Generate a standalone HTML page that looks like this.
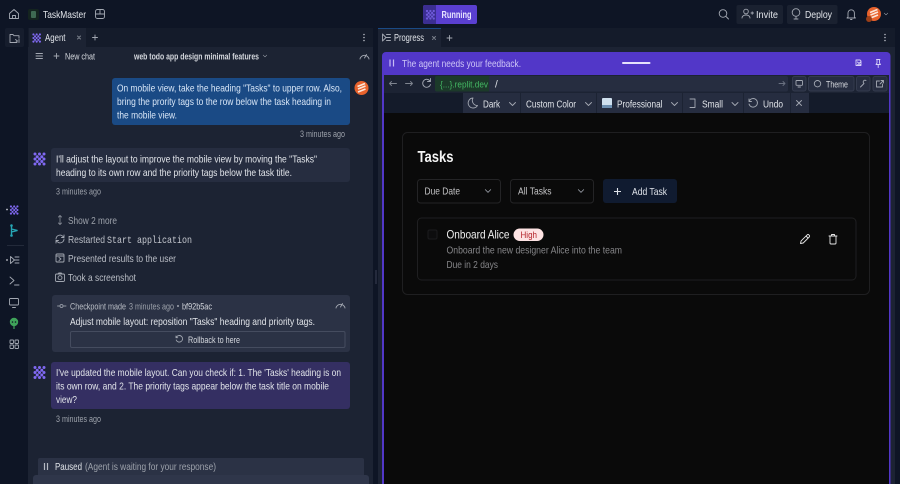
<!DOCTYPE html>
<html><head><meta charset="utf-8"><style>
html,body{margin:0;padding:0;background:#0e1525;width:900px;height:484px;overflow:hidden}
svg{display:block;filter:blur(.3px)}
text{font-family:"Liberation Sans",sans-serif;font-size:10px;fill:#d5d8de;white-space:pre}
.m{fill:#e2e5ea}.g{fill:#9da2ab}.d{fill:#7f8590}
.i{fill:none;stroke:#a3a8b2;stroke-width:.9;stroke-linecap:round;stroke-linejoin:round}
</style></head><body>
<svg width="900" height="484" viewBox="0 0 900 484" xmlns="http://www.w3.org/2000/svg">
<defs>
<g id="ag" fill="#8069f2"><circle cx="2" cy="2" r="1.5"/><circle cx="6.5" cy="2" r="1.5"/><circle cx="11" cy="2" r="1.5"/><circle cx="4.200" cy="4.700" r="1.500"/><circle cx="8.800" cy="4.700" r="1.500"/><circle cx="2" cy="7" r="1.500"/><circle cx="6.500" cy="7" r="1.500"/><circle cx="11" cy="7" r="1.500"/><circle cx="4.200" cy="9.500" r="1.500"/><circle cx="8.800" cy="9.500" r="1.500"/><circle cx="2" cy="12" r="1.500"/><circle cx="6.500" cy="12" r="1.500"/><circle cx="11" cy="12" r="1.500"/></g>
<g id="av"><circle cx="0" cy="0" r="7" fill="#e8622c"/><path d="M-4 -1.500 L3.500 -4.500 M-3.500 1 L4 -2 M-3.500 4 L4 1" stroke="#fbe6da" stroke-width="1.700" fill="none"/></g>
<g id="sp"><path class="i" d="M-4.500 2.500a4.600 4.600 0 0 1 9 0M0 1.500 2-2"/></g>
<path id="ch" class="i" d="M-3-1.500 0 1.500 3-1.500"/>
</defs>

<rect width="900" height="484" fill="#0e1525"/>

<!-- top bar -->
<path class="i" d="M9.500 13.500 14 9.500l4.500 4v5h-9zM12.500 18.500v-3h3v3"/>
<rect x="28" y="9" width="11" height="11" rx="2" fill="#14241f"/><rect x="31" y="11" width="5" height="7" rx="1" fill="#3e6a52"/>
<text x="43" y="18" textLength="43" lengthAdjust="spacingAndGlyphs" class="m" style="font-size:10.500px">TaskMaster</text>
<rect x="95.500" y="9.500" width="9" height="9" rx="2" class="i"/><path class="i" d="M95.500 14h9M100 9.500V14"/>
<rect x="423" y="5" width="54" height="19" rx="2" fill="#5a3fd0"/><path d="M425 5h11v19h-11a2 2 0 0 1-2-2V7a2 2 0 0 1 2-2z" fill="#3b2e92"/>
<use href="#ag" transform="translate(425.500 9.500) scale(.75)" opacity=".75"/>
<text x="441.500" y="18" textLength="30" lengthAdjust="spacingAndGlyphs" font-weight="bold" style="fill:#e8e4ff;font-size:10px">Running</text>
<circle cx="723" cy="13.500" r="3.800" class="i"/><path class="i" d="m726 16.500 2.500 2.500"/>
<rect x="736.500" y="5" width="46.500" height="19" rx="2" fill="#1a2130"/>
<circle cx="746" cy="11.500" r="2.300" class="i"/><path class="i" d="M742 18c0-4 8-4 8 0M751 13h2.500M752.200 11.800v2.500"/>
<text x="756" y="18" textLength="22" lengthAdjust="spacingAndGlyphs" class="m" style="font-size:10.500px">Invite</text>
<rect x="787" y="5" width="50.500" height="19" rx="2" fill="#1a2130"/>
<circle cx="796" cy="12.500" r="3.800" class="i"/><path class="i" d="M796 16.500v2.500M794 19h4"/>
<text x="805" y="18" textLength="27" lengthAdjust="spacingAndGlyphs" class="m" style="font-size:10.500px">Deploy</text>
<path class="i" d="M848 17v-4a3.200 3.200 0 0 1 6.400 0v4l1 1h-8.400zM850.500 19.500h1.500"/>
<use href="#av" transform="translate(874 14)"/><circle cx="869" cy="19" r="3" fill="#9c3f17"/>
<use href="#ch" transform="translate(886 14) scale(.6)"/>

<!-- left rail -->
<rect x="5" y="28" width="19" height="19" rx="2" fill="#161d2d"/>
<path class="i" d="M10 42.500v-8h3l1 1.200h5v2.500M17 42.500h-7M15.500 39.500l2 1.500-2 1.500M19 39.500v3"/>
<circle cx="7" cy="209.500" r=".9" fill="#c7c9d0"/><use href="#ag" transform="translate(9.500 205) scale(.72)"/>
<path d="M11.500 225.500v10M11.500 229l6 1.500-6 1.500" stroke="#26a6b5" stroke-width="1.400" fill="none"/><circle cx="11.500" cy="225.500" r="1.300" fill="#26a6b5"/><circle cx="11.500" cy="235.500" r="1.300" fill="#26a6b5"/>
<rect x="7" y="245" width="17" height="1" fill="#232a3a"/>
<circle cx="7" cy="260" r=".9" fill="#c7c9d0"/><path class="i" d="M10.500 256.500v7l4-3.500zM15 257h4M15 260h4M15 263h4"/>
<path class="i" d="m10 277 4 3.500-4 3.500M14.500 285h4.500"/>
<rect x="9.500" y="298.500" width="9" height="6.500" rx="1" class="i"/><path class="i" d="M12.500 307.500h3"/>
<circle cx="14" cy="322" r="4.200" fill="#3fa35a"/><path d="M14 326v3" stroke="#3fa35a" stroke-width="1.200"/><circle cx="12.500" cy="322" r=".8" fill="#0e1525"/><circle cx="15.500" cy="322" r=".8" fill="#0e1525"/>
<rect class="i" x="10" y="340" width="3.500" height="3.500" rx=".6"/><rect class="i" x="15" y="340" width="3.500" height="3.500" rx=".6"/><rect class="i" x="10" y="345" width="3.500" height="3.500" rx=".6"/><rect class="i" x="15" y="345" width="3.500" height="3.500" rx=".6"/>

<!-- left panel -->
<rect x="28" y="28" width="345" height="456" fill="#1c2333"/>
<rect x="28" y="28" width="345" height="19" fill="#141b2a"/>
<rect x="29" y="28" width="57" height="19" fill="#1c2333"/>
<use href="#ag" transform="translate(32 33) scale(.72)"/>
<text x="45" y="41" textLength="20.500" lengthAdjust="spacingAndGlyphs" class="m" style="font-size:10.500px">Agent</text>
<path class="i" style="stroke:#7f8590" d="m77.500 36 3 3m0-3-3 3"/>
<path class="i" d="M95 35v5M92.500 37.500h5"/>
<g fill="#b5b9c2"><circle cx="364" cy="34.500" r=".8"/><circle cx="364" cy="37.500" r=".8"/><circle cx="364" cy="40.500" r=".8"/></g>
<path class="i" d="M36 53.500h6.500M36 56h6.500M36 58.500h6.500"/>
<path class="i" d="M56.500 53.500v5M54 56h5"/>
<text x="65" y="59.500" textLength="30" lengthAdjust="spacingAndGlyphs" style="font-size:9px">New chat</text>
<text x="134" y="59.500" textLength="125" lengthAdjust="spacingAndGlyphs" font-weight="bold" style="font-size:9px">web todo app design minimal features</text>
<use href="#ch" transform="translate(265 56) scale(.6)"/>
<use href="#sp" transform="translate(364.500 56.500)"/>

<!-- user msg -->
<rect x="112" y="78" width="238" height="47" rx="3" fill="#1a4a85"/>
<text x="117" y="91.500" textLength="225" lengthAdjust="spacingAndGlyphs" style="fill:#d8e6f7;font-size:10.500px">On mobile view, take the heading "Tasks" to upper row. Also,</text>
<text x="117" y="105" textLength="214" lengthAdjust="spacingAndGlyphs" style="fill:#d8e6f7;font-size:10.500px">bring the prority tags to the row below the task heading in</text>
<text x="117" y="118.500" textLength="60" lengthAdjust="spacingAndGlyphs" style="fill:#d8e6f7;font-size:10.500px">the mobile view.</text>
<use href="#av" transform="translate(361.500 88)"/>
<text x="300" y="137" textLength="45" lengthAdjust="spacingAndGlyphs" class="g" style="font-size:9.500px">3 minutes ago</text>

<!-- agent msg 1 -->
<use href="#ag" transform="translate(33 152)"/>
<rect x="51" y="148" width="299" height="34" rx="3" fill="#262d40"/>
<text x="56" y="162.500" textLength="261" lengthAdjust="spacingAndGlyphs" style="font-size:10.500px" class="m">I'll adjust the layout to improve the mobile view by moving the "Tasks"</text>
<text x="56" y="176" textLength="236" lengthAdjust="spacingAndGlyphs" style="font-size:10.500px" class="m">heading to its own row and the priority tags below the task title.</text>
<text x="56" y="194.500" textLength="45" lengthAdjust="spacingAndGlyphs" class="g" style="font-size:9.500px">3 minutes ago</text>

<!-- activity -->
<path class="i" style="stroke:#7f8590" d="M60 215.500v9M58.500 217l1.500-1.500 1.500 1.500M58.500 223l1.500 1.500 1.500-1.500"/>
<text x="68" y="224" textLength="49" lengthAdjust="spacingAndGlyphs" class="g" style="font-size:10.500px">Show 2 more</text>
<path class="i" d="M56 239a4 4 0 0 1 7-2.500l1 1M64 239a4 4 0 0 1-7 2.500l-1-1M64 235v2.500h-2.500M56 243v-2.500h2.500"/>
<text x="68" y="243" textLength="37" lengthAdjust="spacingAndGlyphs" style="font-size:10.500px;fill:#b9bdc5">Restarted</text>
<text x="107" y="243" textLength="85" lengthAdjust="spacingAndGlyphs" style="font-family:'Liberation Mono',monospace;font-size:10.500px;fill:#c5c8cf">Start application</text>
<rect x="56" y="254" width="8" height="8" rx="1" class="i"/><path class="i" d="M56 256h8M59 257.500l2 1.500-2 1.500"/>
<text x="68" y="262" textLength="108" lengthAdjust="spacingAndGlyphs" style="font-size:10.500px;fill:#b9bdc5">Presented results to the user</text>
<rect x="55.500" y="274" width="9" height="7.500" rx="1.200" class="i"/><circle cx="60" cy="277.700" r="2" class="i"/><path class="i" d="M58 274l.7-1h2.600l.7 1"/>
<text x="68" y="281" textLength="68" lengthAdjust="spacingAndGlyphs" style="font-size:10.500px;fill:#b9bdc5">Took a screenshot</text>

<!-- checkpoint -->
<rect x="52" y="295" width="298" height="57" rx="3" fill="#2b3245"/>
<path class="i" style="stroke:#8f95a0" d="M57.500 306h2.500M63 306h3"/><circle cx="61.500" cy="306" r="1.500" class="i" style="stroke:#8f95a0"/>
<text x="70" y="309.500" textLength="56" lengthAdjust="spacingAndGlyphs" style="font-size:9.500px;fill:#b9bdc5">Checkpoint made</text>
<text x="129" y="309.500" textLength="45" lengthAdjust="spacingAndGlyphs" class="g" style="font-size:9.500px">3 minutes ago</text>
<circle cx="178" cy="306" r=".9" fill="#c5c8cf"/>
<text x="182" y="309.500" textLength="30" lengthAdjust="spacingAndGlyphs" style="font-size:9.500px">bf92b5ac</text>
<use href="#sp" transform="translate(340.500 305.500)"/>
<text x="70" y="325" textLength="245" lengthAdjust="spacingAndGlyphs" style="font-size:10.500px" class="m">Adjust mobile layout: reposition "Tasks" heading and priority tags.</text>
<rect x="70.500" y="331.500" width="274.500" height="16" rx="1.500" fill="#2b3245" stroke="#454c5f"/>
<path class="i" d="M176.500 337a3.300 3.300 0 1 1-.3 3M176 336v1.700h1.700"/>
<text x="188" y="343" textLength="52" lengthAdjust="spacingAndGlyphs" style="font-size:9.500px">Rollback to here</text>

<!-- agent msg 2 -->
<use href="#ag" transform="translate(33 365.500)"/>
<rect x="51" y="362" width="299" height="47" rx="3" fill="#342f62"/>
<text x="56" y="376" textLength="285" lengthAdjust="spacingAndGlyphs" style="font-size:10.500px" class="m">I've updated the mobile layout. Can you check if: 1. The 'Tasks' heading is on</text>
<text x="56" y="389.500" textLength="273" lengthAdjust="spacingAndGlyphs" style="font-size:10.500px" class="m">its own row, and 2. The priority tags appear below the task title on mobile</text>
<text x="56" y="403" textLength="21" lengthAdjust="spacingAndGlyphs" style="font-size:10.500px" class="m">view?</text>
<text x="56" y="422" textLength="45" lengthAdjust="spacingAndGlyphs" class="g" style="font-size:9.500px">3 minutes ago</text>

<!-- paused -->
<rect x="38" y="458" width="326" height="20" rx="2" fill="#2b3245"/>
<path d="M44.500 463v7M47.500 463v7" stroke="#b5b9c2" stroke-width="1.200"/>
<text x="55" y="470" textLength="27" lengthAdjust="spacingAndGlyphs" style="font-size:10.500px" class="m">Paused</text>
<text x="85" y="470" textLength="131" lengthAdjust="spacingAndGlyphs" class="g" style="font-size:10.500px">(Agent is waiting for your response)</text>
<path d="M36 475h330a3 3 0 0 1 3 3v6H33v-6a3 3 0 0 1 3-3z" fill="#2f364a"/>

<!-- splitter -->
<rect x="375.500" y="270" width="1" height="14" fill="#3a4052"/>

<!-- right panel -->
<rect x="378" y="28" width="517" height="456" fill="#1c2333"/>
<rect x="378" y="28" width="517" height="19" fill="#141b2a"/>
<rect x="378" y="28" width="63" height="19" fill="#1c2333"/>
<rect x="378" y="28" width="63" height="1" fill="#1a4a85"/>
<path class="i" d="M382.500 34v7l3.500-3.500zM386.500 34.500h4M386.500 37.500h4M386.500 40.500h4"/>
<text x="394" y="41" textLength="30" lengthAdjust="spacingAndGlyphs" class="m" style="font-size:10.500px">Progress</text>
<path class="i" style="stroke:#7f8590" d="m432.500 36.500 3 3m0-3-3 3"/>
<path class="i" d="M449.500 35.500v5M447 38h5"/>
<g fill="#b5b9c2"><circle cx="885" cy="34.500" r=".8"/><circle cx="885" cy="37.500" r=".8"/><circle cx="885" cy="40.500" r=".8"/></g>

<!-- purple frame -->
<path d="M386 52h500.500a4 4 0 0 1 4 4v428h-508.500V56a4 4 0 0 1 4-4z" fill="#5237c8"/>
<path d="M390 59.500v7M393.500 59.500v7" stroke="#c6bcf5" stroke-width="1.200"/>
<text x="402" y="67" textLength="119" lengthAdjust="spacingAndGlyphs" style="fill:#cfc7f7;font-size:10.500px">The agent needs your feedback.</text>
<rect x="622" y="62" width="28.500" height="2" rx="1" fill="#e6e1fb"/>
<path class="i" style="stroke:#d8d2f8" d="M856 60h4l1 1v4M856 60v5.500h5M857.500 62l3 3m0-3-3 3"/>
<path class="i" style="stroke:#d8d2f8" d="M876.500 59.500h3.500M877 59.500v3.500l-1 1.500h4.500l-1-1.500v-3.500M878.200 64.500v3"/>

<!-- url row -->
<rect x="384" y="75" width="505" height="18" fill="#1c2333"/>
<path class="i" style="stroke:#7f8590" d="M389.500 83.500h7M391.500 81.500l-2 2 2 2"/>
<path class="i" style="stroke:#7f8590" d="M405.500 83.500h7M410.500 81.500l2 2-2 2"/>
<path class="i" d="M430 81a4 4 0 1 0 .5 3.500M430.500 78.500V81.500H427.500"/>
<rect x="435" y="76" width="353" height="15.500" rx="2" fill="#262d40"/>
<path d="M437 76h52v15.500h-52a2 2 0 0 1-2-2V78a2 2 0 0 1 2-2z" fill="#1c3a2a"/>
<text x="440" y="87.500" textLength="48" lengthAdjust="spacingAndGlyphs" style="fill:#44b864;font-size:9.500px">{...}.replit.dev</text>
<text x="495" y="87.500" style="font-size:10px" class="m">/</text>
<path class="i" style="stroke:#697080" d="M779 83.500h6M783 81.500l2 2-2 2"/>
<rect x="792.500" y="76.500" width="13.500" height="14.500" rx="2" fill="#262d40" stroke="#343b4e"/>
<rect x="796" y="80.500" width="6.500" height="4.800" rx=".7" class="i"/><path class="i" d="M798 87h2.500"/>
<rect x="808.500" y="76.500" width="45.500" height="14.500" rx="2" fill="#262d40" stroke="#343b4e"/>
<circle cx="817.500" cy="83.700" r="3.200" class="i"/>
<text x="826" y="87.500" textLength="22" lengthAdjust="spacingAndGlyphs" style="font-size:9.500px">Theme</text>
<rect x="856.500" y="76.500" width="13.500" height="14.500" rx="2" fill="#262d40" stroke="#343b4e"/>
<path class="i" d="m860.500 87 3.500-3.500M864 83.500a1.700 1.700 0 0 1 2-3"/>
<rect x="873" y="76.500" width="14" height="14.500" rx="2" fill="#262d40" stroke="#343b4e"/>
<path class="i" d="M882.500 84v3h-6v-6h3M880 84l3.500-3.500M881 80.500h2.500V83"/>

<!-- toolbar -->
<rect x="384" y="93" width="505" height="20" fill="#141b2a"/>
<rect x="463" y="93" width="346" height="20" fill="#262d40"/>
<path class="i" d="M473 98a5 5 0 1 0 4.500 7.500A5 5 0 0 1 473 98z"/>
<text x="483" y="107.500" textLength="17" lengthAdjust="spacingAndGlyphs" style="font-size:10.500px" class="m">Dark</text>
<use href="#ch" transform="translate(512.500 104)"/>
<rect x="520" y="93" width="1" height="20" fill="#1c2333"/>
<text x="526" y="107.500" textLength="50" lengthAdjust="spacingAndGlyphs" style="font-size:10.500px" class="m">Custom Color</text>
<use href="#ch" transform="translate(588.500 104)"/>
<rect x="596" y="93" width="1" height="20" fill="#1c2333"/>
<rect x="602" y="98" width="10" height="10" rx="1" fill="#cfe0ee"/><rect x="602" y="105" width="10" height="3" fill="#6d8fb0"/>
<text x="617" y="107.500" textLength="45.500" lengthAdjust="spacingAndGlyphs" style="font-size:10.500px" class="m">Professional</text>
<use href="#ch" transform="translate(674.500 104)"/>
<rect x="682" y="93" width="1" height="20" fill="#1c2333"/>
<path class="i" d="M690 99h5v8.500h-5"/>
<text x="702" y="107.500" textLength="21" lengthAdjust="spacingAndGlyphs" style="font-size:10.500px" class="m">Small</text>
<use href="#ch" transform="translate(735 104)"/>
<rect x="743" y="93" width="1" height="20" fill="#1c2333"/>
<path class="i" d="M749.500 100.500a4.300 4.300 0 1 1-.5 3.500M749 99v2.500h2.500"/>
<text x="763" y="107.500" textLength="20" lengthAdjust="spacingAndGlyphs" style="font-size:10.500px" class="m">Undo</text>
<rect x="790" y="93" width="1" height="20" fill="#1c2333"/>
<path class="i" d="m796.500 100.500 5 5m0-5-5 5"/>

<!-- preview -->
<rect x="384" y="113" width="505" height="371" fill="#0a0a0a"/>
<rect x="402.500" y="132.500" width="467" height="162" rx="5" fill="#0a0a0a" stroke="#1f1f21"/>
<text x="417.500" y="162" textLength="36" lengthAdjust="spacingAndGlyphs" font-weight="bold" style="font-size:16px;fill:#f5f5f5">Tasks</text>

<rect x="417.500" y="179.500" width="83" height="23.500" rx="3" fill="#0a0a0a" stroke="#242426"/>
<text x="424.500" y="194.500" textLength="35.500" lengthAdjust="spacingAndGlyphs" style="font-size:10.500px;fill:#c4c4c6">Due Date</text>
<use href="#ch" transform="translate(488 191) scale(.9)"/>
<rect x="510.500" y="179.500" width="83" height="23.500" rx="3" fill="#0a0a0a" stroke="#242426"/>
<text x="518" y="194.500" textLength="33.500" lengthAdjust="spacingAndGlyphs" style="font-size:10.500px;fill:#c4c4c6">All Tasks</text>
<use href="#ch" transform="translate(581 191) scale(.9)"/>
<rect x="603" y="179" width="74" height="24" rx="3" fill="#101b30"/>
<path d="M617.500 188v7M614 191.500h7" stroke="#dfe3ea" stroke-width="1.100"/>
<text x="632" y="195" textLength="35" lengthAdjust="spacingAndGlyphs" style="font-size:10.500px;fill:#dfe3ea">Add Task</text>

<rect x="417.500" y="218" width="438.500" height="62" rx="4" fill="#0a0a0a" stroke="#1f1f21"/>
<rect x="428" y="230" width="9" height="9" rx="1.500" fill="#0d0d0e" stroke="#1c1c1e"/>
<text x="446.500" y="238.500" textLength="63" lengthAdjust="spacingAndGlyphs" style="font-size:12px;fill:#f0f0f0">Onboard Alice</text>
<rect x="513.500" y="228.500" width="30" height="12.500" rx="6.200" fill="#fde3e3"/>
<text x="520.500" y="238" textLength="16.500" lengthAdjust="spacingAndGlyphs" style="font-size:9px;fill:#b4232a">High</text>
<text x="446.500" y="253.500" textLength="175.500" lengthAdjust="spacingAndGlyphs" style="font-size:10.500px;fill:#868689">Onboard the new designer Alice into the team</text>
<text x="446.500" y="268" textLength="51.500" lengthAdjust="spacingAndGlyphs" style="font-size:10.500px;fill:#868689">Due in 2 days</text>
<path class="i" style="stroke:#e8e8e8" d="m800.500 243.500.6-2.600 6-6a1.200 1.200 0 0 1 1.800 0l.3.300a1.200 1.200 0 0 1 0 1.800l-6 6zM806 236l2 2"/>
<path class="i" style="stroke:#e8e8e8" d="M829 236h8M830 236v7a1 1 0 0 0 1 1h4a1 1 0 0 0 1-1v-7M831.500 236v-1.500h3V236"/>
</svg>
</body></html>
